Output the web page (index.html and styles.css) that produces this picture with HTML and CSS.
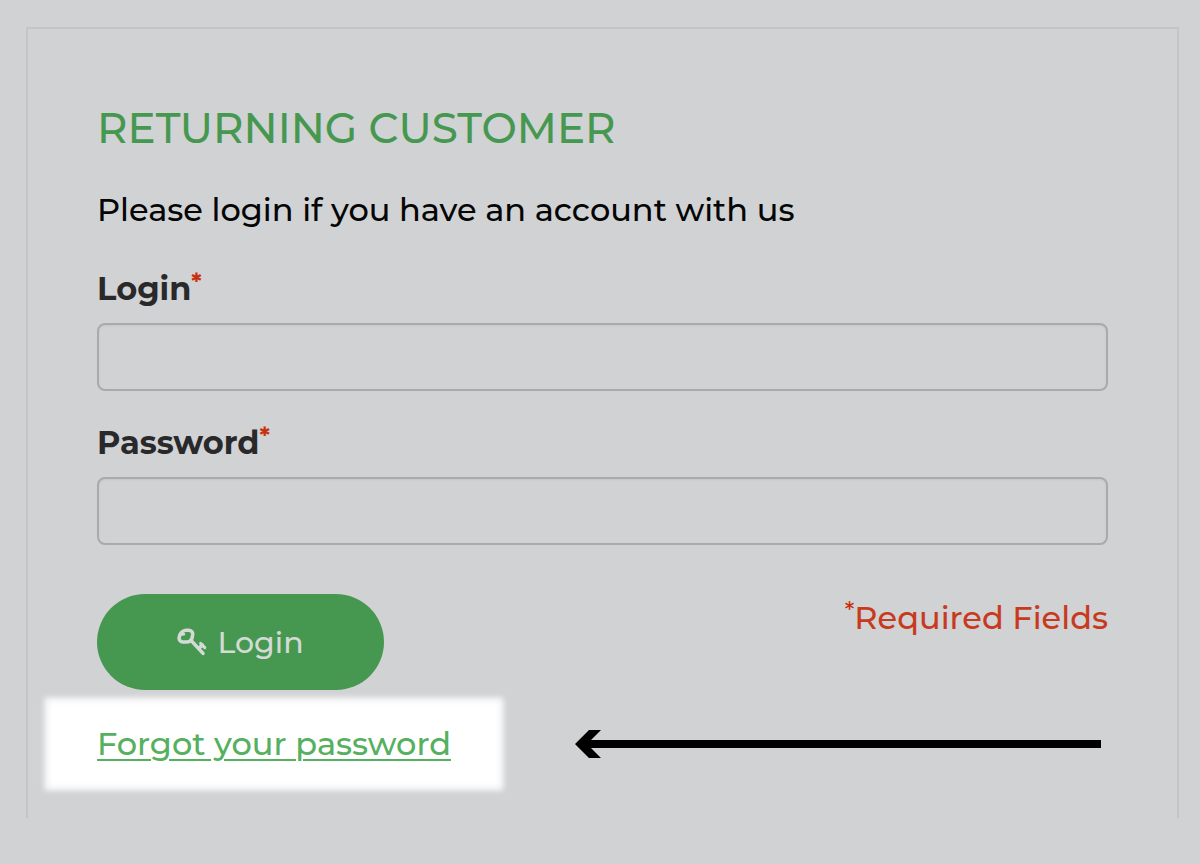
FILE: index.html
```html
<!DOCTYPE html>
<html lang="en">
<head>
<meta charset="utf-8">
<meta name="viewport" content="width=device-width, initial-scale=1">
<title>Returning customer</title>
<link rel="stylesheet" href="styles.css">
</head>
<body class="page">
<main class="panel">
  <h1 class="title">RETURNING CUSTOMER</h1>
  <p class="intro">Please login if you have an account with us</p>
  <form class="form">
    <div class="field">
      <label class="label" for="login">Login<span class="star">*</span></label>
      <input class="input" id="login" type="text">
    </div>
    <div class="field">
      <label class="label" for="password">Password<span class="star">*</span></label>
      <input class="input" id="password" type="password">
    </div>
    <div class="actions">
      <button class="button" type="submit">
        <svg class="key" viewBox="0 0 30 28" fill="none" stroke="currentColor" stroke-width="3.6" stroke-linejoin="round" stroke-linecap="round" aria-hidden="true">
          <path d="M9 2.2H12C14.6 2.4 16 4.4 15.6 7L15 10.2C14.2 12.8 12.2 14 9.6 14H6C3.4 13.8 1.8 12 2.2 9.4C2.8 5.8 5 2.8 9 2.2Z"/>
          <path d="M5 6.4L7 6.2" stroke-width="2.6"/>
          <path d="M14 12.4L26 25.4M21.6 20.4L25.4 17.2"/>
          <path d="M23.6 15.4L27.8 19.6" stroke-width="3"/>
        </svg>
        <span>Login</span>
      </button>
      <p class="required"><span class="star">*</span>Required Fields</p>
    </div>
  </form>
  <div class="help">
    <div class="spotlight"><a class="link" href="#">Forgot your password</a></div>
    <div class="arrow">
      <svg class="arrow-head" viewBox="0 0 26 28" aria-hidden="true"><path d="M0 14L14 0H26L16 10V18L26 28H14Z"/></svg>
      <span class="arrow-line"></span>
    </div>
  </div>
</main>
</body>
</html>
```
FILE: styles.css
```css
* {
  box-sizing: border-box;
}

.page {
  margin: 0;
  padding: 27px 21px 46px 26px;
  background: #d1d2d4;
  color: #050506;
  font-family: Montserrat, Inter, sans-serif;
  font-size: 32px;
  font-weight: 500;
  line-height: 48px;
}

.panel {
  padding: 75px 69px 30px;
  border: 2px solid #c4c5c7;
  border-bottom: 0;
}

.title {
  margin: 0 0 34px;
  color: #469850;
  font-size: 42px;
  font-weight: 500;
  line-height: 48px;
}

.intro {
  margin: 0 0 31px;
}

.field {
  display: flex;
  flex-direction: column;
  gap: 10px;
  margin-bottom: 28px;
}

.label {
  color: #29292b;
  font-weight: 700;
}

.star {
  color: #c9300f;
  font-size: 24px;
  line-height: 0;
  vertical-align: 10px;
}

.input {
  width: 100%;
  height: 68px;
  padding: 0 16px;
  border: 2px solid #a9aaac;
  border-radius: 8px;
  background: transparent;
  box-shadow: inset 0 1px 2px #c5c6c8;
  color: inherit;
  font: inherit;
}

.actions {
  display: flex;
  align-items: flex-start;
  justify-content: space-between;
  padding-top: 21px;
}

.button {
  display: flex;
  align-items: center;
  justify-content: center;
  gap: 10px;
  min-width: 287px;
  height: 96px;
  border: 0;
  border-radius: 48px;
  background: #469850;
  color: #d4dad5;
  font-family: inherit;
  font-size: 30px;
  font-weight: 500;
}

.key {
  width: 30px;
  height: 28px;
}

.required {
  margin: 0;
  color: #c83a20;
}

.help {
  display: flex;
  align-items: center;
  gap: 74px;
  margin: 10px 7px 0 -50px;
}

.spotlight {
  padding: 20px 50px;
  background: #fff;
  box-shadow: 0 0 6px 2px #fff, inset 0 0 6px #e8e8e8;
}

.link {
  color: #55b060;
  text-decoration-thickness: 2px;
  text-underline-offset: 4px;
}

.arrow {
  display: flex;
  flex: 1;
  align-items: center;
}

.arrow-head {
  width: 26px;
  height: 28px;
}

.arrow-line {
  flex: 1;
  height: 8px;
  margin-left: -14px;
  background: #000;
}
```
